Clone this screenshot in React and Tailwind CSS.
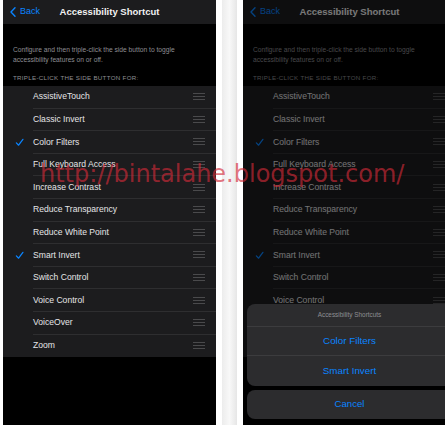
import React from 'react';

const items = [
  { name: 'AssistiveTouch' },
  { name: 'Classic Invert' },
  { name: 'Color Filters', checked: true },
  { name: 'Full Keyboard Access' },
  { name: 'Increase Contrast' },
  { name: 'Reduce Transparency' },
  { name: 'Reduce White Point' },
  { name: 'Smart Invert', checked: true },
  { name: 'Switch Control' },
  { name: 'Voice Control' },
  { name: 'VoiceOver' },
  { name: 'Zoom' },
];

const Check = () => (
  <svg width="9" height="9" viewBox="0 0 10 10" fill="none">
    <path d="M1.5 5.4 L4 8 L8.8 1.5" stroke="#0a84ff" strokeWidth="1.4" strokeLinecap="round" strokeLinejoin="round" />
  </svg>
);

const Grabber = () => (
  <div className="flex flex-col gap-[2px] w-[12px]">
    <div className="h-px bg-[#4a4a4c]" />
    <div className="h-px bg-[#4a4a4c]" />
    <div className="h-px bg-[#4a4a4c]" />
  </div>
);

const Phone = () => (
  <div className="w-[213px] h-[425px] bg-black flex flex-col">
    {/* Nav bar */}
    <div className="h-[24px] bg-[#1c1c1e] flex items-center relative">
      <div className="flex items-center gap-[4px] pl-[7px] text-[#0a84ff] text-[9px]">
        <svg width="6" height="10" viewBox="0 0 6 10" fill="none">
          <path d="M5 0.8 L1 5 L5 9.2" stroke="#0a84ff" strokeWidth="1.4" strokeLinecap="round" strokeLinejoin="round" />
        </svg>
        <span>Back</span>
      </div>
      <div className="absolute inset-0 flex items-center justify-center text-[9.5px] font-bold text-[#f2f2f2] pointer-events-none">
        Accessibility Shortcut
      </div>
    </div>

    {/* Description */}
    <div className="pt-[21px] px-[10px] text-[6.7px] leading-[10px] text-[#8e8e93]">
      Configure and then triple-click the side button to toggle accessibility features on or off.
    </div>
    <div className="mt-[8px] mb-[3px] px-[10px] h-[10px] leading-[10px] text-[6.2px] tracking-[0.3px] text-[#8e8e93]">
      TRIPLE-CLICK THE SIDE BUTTON FOR:
    </div>

    {/* List */}
    <div className="bg-[#1c1c1e]">
      {items.map((it, i) => (
        <div key={it.name} className="h-[22.6px] flex items-center">
          <div className="w-[30px] flex justify-center pl-[2px]">{it.checked && <Check />}</div>
          <div className={`flex-1 h-full flex items-center pr-[11px] ${i < items.length - 1 ? 'border-b border-[#2e2e30]' : ''}`}>
            <span className="flex-1 text-[8.6px] text-[#e5e5e7]">{it.name}</span>
            <Grabber />
          </div>
        </div>
      ))}
    </div>
  </div>
);

export default function App() {
  return (
    <div className="w-[445px] h-[425px] bg-white flex overflow-hidden relative" style={{ fontFamily: '"Liberation Sans", Arial, sans-serif' }}>
      <div className="ml-[3px] shrink-0">
        <Phone />
      </div>

      {/* gutter */}
      <div className="w-[27px] shrink-0 flex justify-center">
        <div className="w-[15px] h-full bg-gradient-to-r from-[#ececec] via-[#f8f8f8] to-[#e6e6e6]" />
      </div>

      {/* dimmed phone with action sheet */}
      <div className="relative shrink-0 w-[213px] h-[425px]">
        <Phone />
        <div className="absolute inset-0 bg-black/50" />
        <div className="absolute inset-x-[4px] bottom-[6px] flex flex-col gap-[4px]">
          <div className="bg-[#2c2c2e] rounded-[8px] overflow-hidden">
            <div className="h-[23px] flex items-center justify-center text-[6.4px] text-[#8e8e93] border-b border-[#3c3c3e]">
              Accessibility Shortcuts
            </div>
            <div className="h-[29px] flex items-center justify-center text-[9.8px] text-[#0a84ff] border-b border-[#3c3c3e]">
              Color Filters
            </div>
            <div className="h-[30px] flex items-center justify-center text-[9.8px] text-[#0a84ff]">
              Smart Invert
            </div>
          </div>
          <div className="bg-[#2c2c2e] rounded-[8px] h-[29px] flex items-center justify-center text-[9.6px] font-medium text-[#0a84ff]">
            Cancel
          </div>
        </div>
      </div>

      {/* watermark */}
      <div
        className="absolute left-[40px] top-[162px] text-[24px] leading-[24px] text-[#d42a38]/65 whitespace-nowrap pointer-events-none"
        style={{ fontFamily: '"DejaVu Sans", sans-serif' }}
      >
        http://bintalahe.blogspot.com/
      </div>
    </div>
  );
}
